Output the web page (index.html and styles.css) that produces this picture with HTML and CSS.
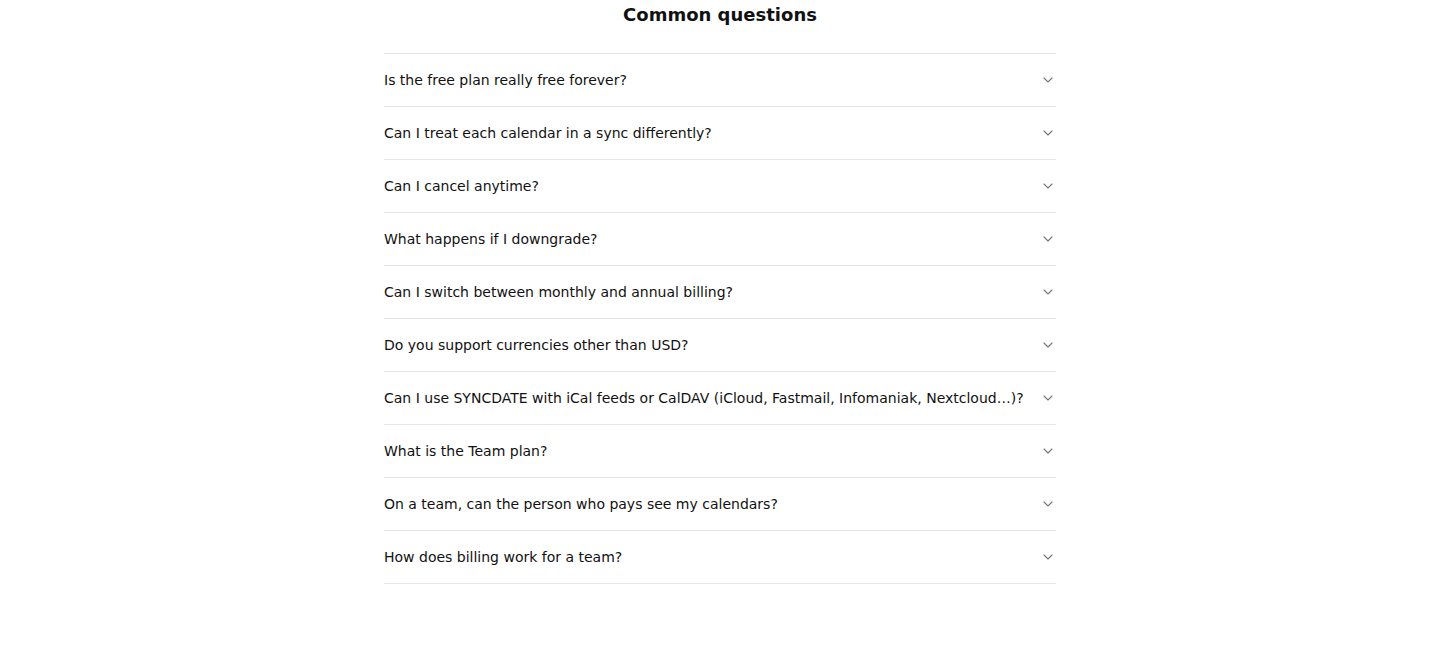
FILE: index.html
```html
<!DOCTYPE html>
<html>
<head>
<meta charset="utf-8">
<link rel="stylesheet" href="styles.css">
</head>
<body>
<section class="faq">
  <h2 class="faq-title">Common questions</h2>
  <div class="faq-list">
    <div class="faq-item"><span>Is the free plan really free forever?</span><svg class="chev" viewBox="0 0 24 24"><path d="m6 9 6 6 6-6"/></svg></div>
    <div class="faq-item"><span>Can I treat each calendar in a sync differently?</span><svg class="chev" viewBox="0 0 24 24"><path d="m6 9 6 6 6-6"/></svg></div>
    <div class="faq-item"><span>Can I cancel anytime?</span><svg class="chev" viewBox="0 0 24 24"><path d="m6 9 6 6 6-6"/></svg></div>
    <div class="faq-item"><span>What happens if I downgrade?</span><svg class="chev" viewBox="0 0 24 24"><path d="m6 9 6 6 6-6"/></svg></div>
    <div class="faq-item"><span>Can I switch between monthly and annual billing?</span><svg class="chev" viewBox="0 0 24 24"><path d="m6 9 6 6 6-6"/></svg></div>
    <div class="faq-item"><span>Do you support currencies other than USD?</span><svg class="chev" viewBox="0 0 24 24"><path d="m6 9 6 6 6-6"/></svg></div>
    <div class="faq-item"><span>Can I use SYNCDATE with iCal feeds or CalDAV (iCloud, Fastmail, Infomaniak, Nextcloud…)?</span><svg class="chev" viewBox="0 0 24 24"><path d="m6 9 6 6 6-6"/></svg></div>
    <div class="faq-item"><span>What is the Team plan?</span><svg class="chev" viewBox="0 0 24 24"><path d="m6 9 6 6 6-6"/></svg></div>
    <div class="faq-item"><span>On a team, can the person who pays see my calendars?</span><svg class="chev" viewBox="0 0 24 24"><path d="m6 9 6 6 6-6"/></svg></div>
    <div class="faq-item"><span>How does billing work for a team?</span><svg class="chev" viewBox="0 0 24 24"><path d="m6 9 6 6 6-6"/></svg></div>
  </div>
</section>
</body>
</html>
```
FILE: styles.css
```css
html, body {
  margin: 0;
  padding: 0;
  background: #fff;
}
body {
  font-family: "DejaVu Sans", sans-serif;
  color: #111;
}
.faq {
  width: 672px;
  margin: 0 auto;
}
.faq-title {
  margin: 0 0 24px;
  font-size: 18px;
  line-height: 29px;
  font-weight: 700;
  text-align: center;
  color: #111;
}
.faq-list {
  border-bottom: 1px solid #e5e5e5;
}
.faq-item {
  display: flex;
  align-items: center;
  justify-content: space-between;
  gap: 16px;
  border-top: 1px solid #e5e5e5;
  padding: 16px 0;
  font-size: 14px;
  line-height: 20px;
}
.chev {
  width: 16px;
  height: 16px;
  flex: none;
  fill: none;
  stroke: #777;
  stroke-width: 1.6;
  stroke-linecap: round;
  stroke-linejoin: round;
}
```
